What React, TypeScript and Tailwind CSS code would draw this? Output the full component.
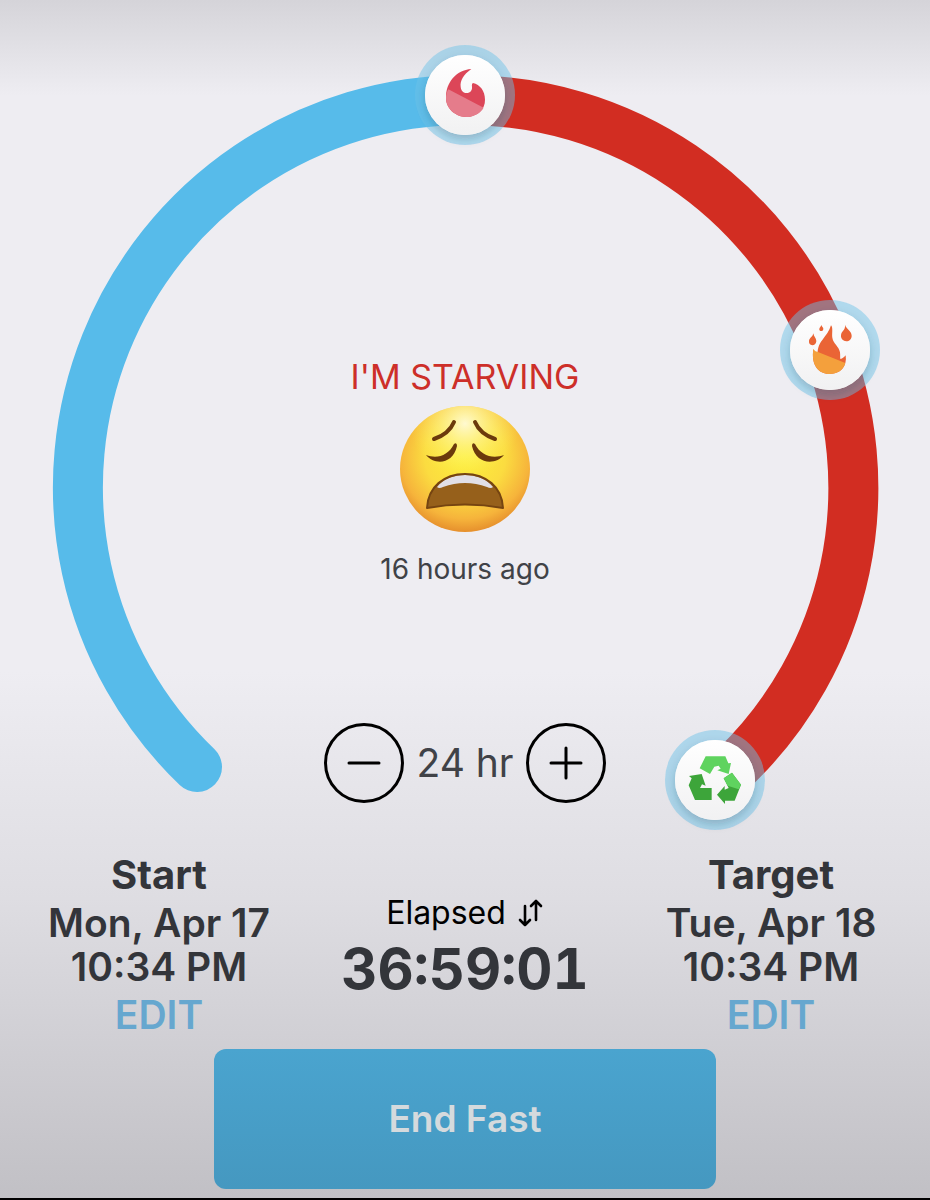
import { useState } from "react";

const GOAL_HOURS = 24;

function MarkerDisc() {
  return (
    <>
      <circle r="50" fill="#6cc2e8" fillOpacity="0.48" />
      <circle r="40" fill="#fafafa" filter="url(#discShadow)" />
      <circle r="40" fill="url(#disc)" />
    </>
  );
}

function FlameMarker() {
  return (
    <g transform="translate(465 95)">
      <MarkerDisc />
      <g transform="scale(0.3333) translate(-195 -195)">
        <path
          d="M214 117C190 134 180 152 182 170C183 183 191 189 200 189C211 189 217 181 216 171C215 165 216 161 219 159C240 164 255 182 255 209C256 238 231 260 198 261C164 260 137 234 138 202C138 158 168 120 214 117Z"
          fill="#dc4658"
        />
        <path
          d="M145 178L251 233C241 250 222 261 198 261C164 260 137 234 138 202C138 193 141 185 145 178Z"
          fill="#e57c8b"
        />
      </g>
    </g>
  );
}

function FireMarker() {
  return (
    <g transform="translate(830 350)">
      <MarkerDisc />
      <g transform="scale(0.3333) translate(-195 -195)">
        <path
          d="M198 121C205 128 200 145 202 158C205 177 222 183 225 202C226 210 225 216 226 222C233 221 238 216 242 211C247 244 227 267 194 267C160 267 138 240 145 192C148 199 152 204 158 208C157 195 160 180 172 165C183 150 193 139 198 121Z"
          fill="#ea6435"
        />
        <path
          d="M145 192C148 197 152 200 157 200L241 234C235 255 217 267 194 267C160 267 138 240 145 192Z"
          fill="#f4a03c"
        />
        <path d="M145 145C147 156 154 160 154 169C153 177 148 181 142 181C135 180 131 175 132 168C133 158 143 157 145 145Z" fill="#ea6435" />
        <path d="M169 120C170 125 175 127 175 131C175 135 172 138 169 138C165 138 162 135 163 131C164 127 168 125 169 120Z" fill="#ea6435" />
        <path d="M240 119C243 131 260 138 260 152C260 162 253 169 244 169C234 168 227 161 228 151C229 137 242 136 240 119Z" fill="#ea6435" />
      </g>
    </g>
  );
}

function RecycleMarker() {
  return (
    <g transform="translate(715 780)">
      <MarkerDisc />
      <g transform="scale(0.3333) translate(-195 -195)">
        <path d="M167 124H226L235 145L243 144L236 177L202 166L212 161L206 152L193 155L180 177L149 160Z" fill="#5fd35f" />
        <path d="M117 183L155 177L167 212L156 208L150 219H185V255H135L116 211L125 190Z" fill="#3da53a" />
        <path d="M246 173L221 190L236 219L224 224V213L201 239L225 267V257H254L273 209Z" fill="#3da53a" />
        <path d="M246 173L221 190L233 212L266 223L273 209Z" fill="#5fd35f" />
      </g>
    </g>
  );
}

function Dial() {
  return (
    <svg viewBox="0 0 930 840" className="block w-full" role="img" aria-label="Fasting progress">
      <defs>
        <linearGradient id="disc" x1="0" y1="0" x2="0" y2="1">
          <stop offset="0" stopColor="#ffffff" />
          <stop offset="1" stopColor="#f1f1f2" />
        </linearGradient>
        <filter id="discShadow" x="-30%" y="-30%" width="160%" height="160%">
          <feDropShadow dx="0" dy="4" stdDeviation="4" floodColor="#25485c" floodOpacity="0.25" />
        </filter>
      </defs>
      <g fill="none" strokeWidth="50">
        <path d="M197 767A387.5 387.5 0 0 1 465 100" stroke="#57bbea" strokeLinecap="round" />
        <path d="M465 100A388 388 0 0 1 735 767" stroke="#d22d22" />
      </g>
      <FlameMarker />
      <FireMarker />
      <RecycleMarker />
    </svg>
  );
}

function WearyFace() {
  return (
    <svg viewBox="0 0 132 128" className="mt-2 h-32 w-33" role="img" aria-label="Weary face">
      <defs>
        <radialGradient id="skin" cx="0.5" cy="0.4" r="0.62">
          <stop offset="0" stopColor="#fdf03c" />
          <stop offset="0.5" stopColor="#fbdc40" />
          <stop offset="0.8" stopColor="#f6b43b" />
          <stop offset="1" stopColor="#e3892a" />
        </radialGradient>
        <radialGradient id="shine" cx="0.5" cy="0.14" r="0.42">
          <stop offset="0" stopColor="#fffbd8" stopOpacity="0.95" />
          <stop offset="1" stopColor="#fff35a" stopOpacity="0" />
        </radialGradient>
        <clipPath id="mouth">
          <path d="M28 103C29 82 45 69 66 69C87 69 103 82 104 103Q66 96 28 103Z" />
        </clipPath>
      </defs>
      <ellipse cx="66" cy="64" rx="65" ry="63" fill="url(#skin)" />
      <ellipse cx="66" cy="64" rx="65" ry="63" fill="url(#shine)" />
      <g fill="none" stroke="#6b3a0c" strokeWidth="4" strokeLinecap="round">
        <path d="M55 17Q50 29 35 34" />
        <path d="M76 17Q81 29 96 34" />
      </g>
      <path d="M27 50C38 54 49 51 55 39Q58 37 58 41C54 60 35 60 27 50Z" fill="#6b3a0c" />
      <path d="M105 50C94 54 82 51 76 39Q73 37 73 41C77 60 97 60 105 50Z" fill="#6b3a0c" />
      <path d="M28 103C29 82 45 69 66 69C87 69 103 82 104 103Q66 96 28 103Z" fill="#96601b" />
      <path d="M38 82C50 66 82 66 94 82Q92 84 88 82Q66 74 44 82Q40 84 38 82Z" fill="#e1dfe6" clipPath="url(#mouth)" />
      <path d="M28 103C29 82 45 69 66 69C87 69 103 82 104 103Q66 96 28 103Z" fill="none" stroke="#754411" strokeWidth="2" strokeLinejoin="round" />
    </svg>
  );
}

function StepButton({ label, plus, onClick }: { label: string; plus?: boolean; onClick: () => void }) {
  return (
    <button
      type="button"
      aria-label={label}
      onClick={onClick}
      className="flex size-20 items-center justify-center rounded-full border-3 border-black"
    >
      <svg viewBox="0 0 34 34" className="size-[34px]" fill="none" stroke="#000" strokeWidth="3" strokeLinecap="round">
        <path d="M2 17H32" />
        {plus && <path d="M17 2V32" />}
      </svg>
    </button>
  );
}

function DateColumn({ title, date, time }: { title: string; date: string; time: string }) {
  return (
    <section className="flex flex-col items-center text-[39px] leading-[44px] font-semibold whitespace-nowrap text-[#33353a]">
      <h2 className="mb-1 text-[40px] font-bold">{title}</h2>
      <p>{date}</p>
      <p>{time}</p>
      <button type="button" aria-label={`Edit ${title.toLowerCase()}`} className="mt-1 text-[#66a7cf]">
        EDIT
      </button>
    </section>
  );
}

export default function App() {
  const [hours, setHours] = useState(GOAL_HOURS);

  return (
    <main className="min-h-screen border-b-2 border-black bg-[linear-gradient(to_bottom,#d5d4d9_0%,#eeedf2_8%,#eeedf2_56%,#dedde2_75%,#c1c0c5_100%)] font-['Inter',sans-serif]">
      <div className="mx-auto flex max-w-[930px] flex-col pb-2">
        <div className="grid">
          <div className="col-start-1 row-start-1">
            <Dial />
          </div>
          <div className="col-start-1 row-start-1 flex flex-col items-center pt-[357px]">
            <h1 className="text-[34px] leading-10 text-[#cd2f29]">I'M STARVING</h1>
            <WearyFace />
            <p className="mt-5 text-[28px] leading-8 text-[#404247]">16 hours ago</p>
            <div className="mt-[138px] flex items-center gap-3">
              <StepButton label="Decrease goal" onClick={() => setHours(Math.max(1, hours - 1))} />
              <span className="text-[39px] leading-[48px] text-[#404247]">{hours} hr</span>
              <StepButton label="Increase goal" plus onClick={() => setHours(hours + 1)} />
            </div>
          </div>
        </div>

        <div className="mt-[13px] grid grid-cols-3 px-1.5">
          <DateColumn title="Start" date="Mon, Apr 17" time="10:34 PM" />
          <section className="flex flex-col items-center pt-10">
            <button type="button" className="flex items-center gap-3 text-[32px] leading-10 text-black">
              Elapsed
              <svg viewBox="0 0 26 28" className="h-7 w-[26px]" fill="none" stroke="#000" strokeWidth="2.6" strokeLinecap="round" strokeLinejoin="round">
                <path d="M7 7V26M2 21L7 26L12 21" />
                <path d="M18 21V2M13 7L18 2L23 7" />
              </svg>
            </button>
            <p className="mt-1 text-[56px] leading-[64px] font-bold whitespace-nowrap text-[#33353a] tabular-nums">36:59:01</p>
          </section>
          <DateColumn title="Target" date="Tue, Apr 18" time="10:34 PM" />
        </div>

        <button
          type="button"
          className="mx-auto mt-3 h-[140px] w-[54%] rounded-xl bg-linear-to-b from-[#4aa4cf] to-[#4598c0] text-[37px] font-semibold text-[#d5dadd]"
        >
          End Fast
        </button>
      </div>
    </main>
  );
}
